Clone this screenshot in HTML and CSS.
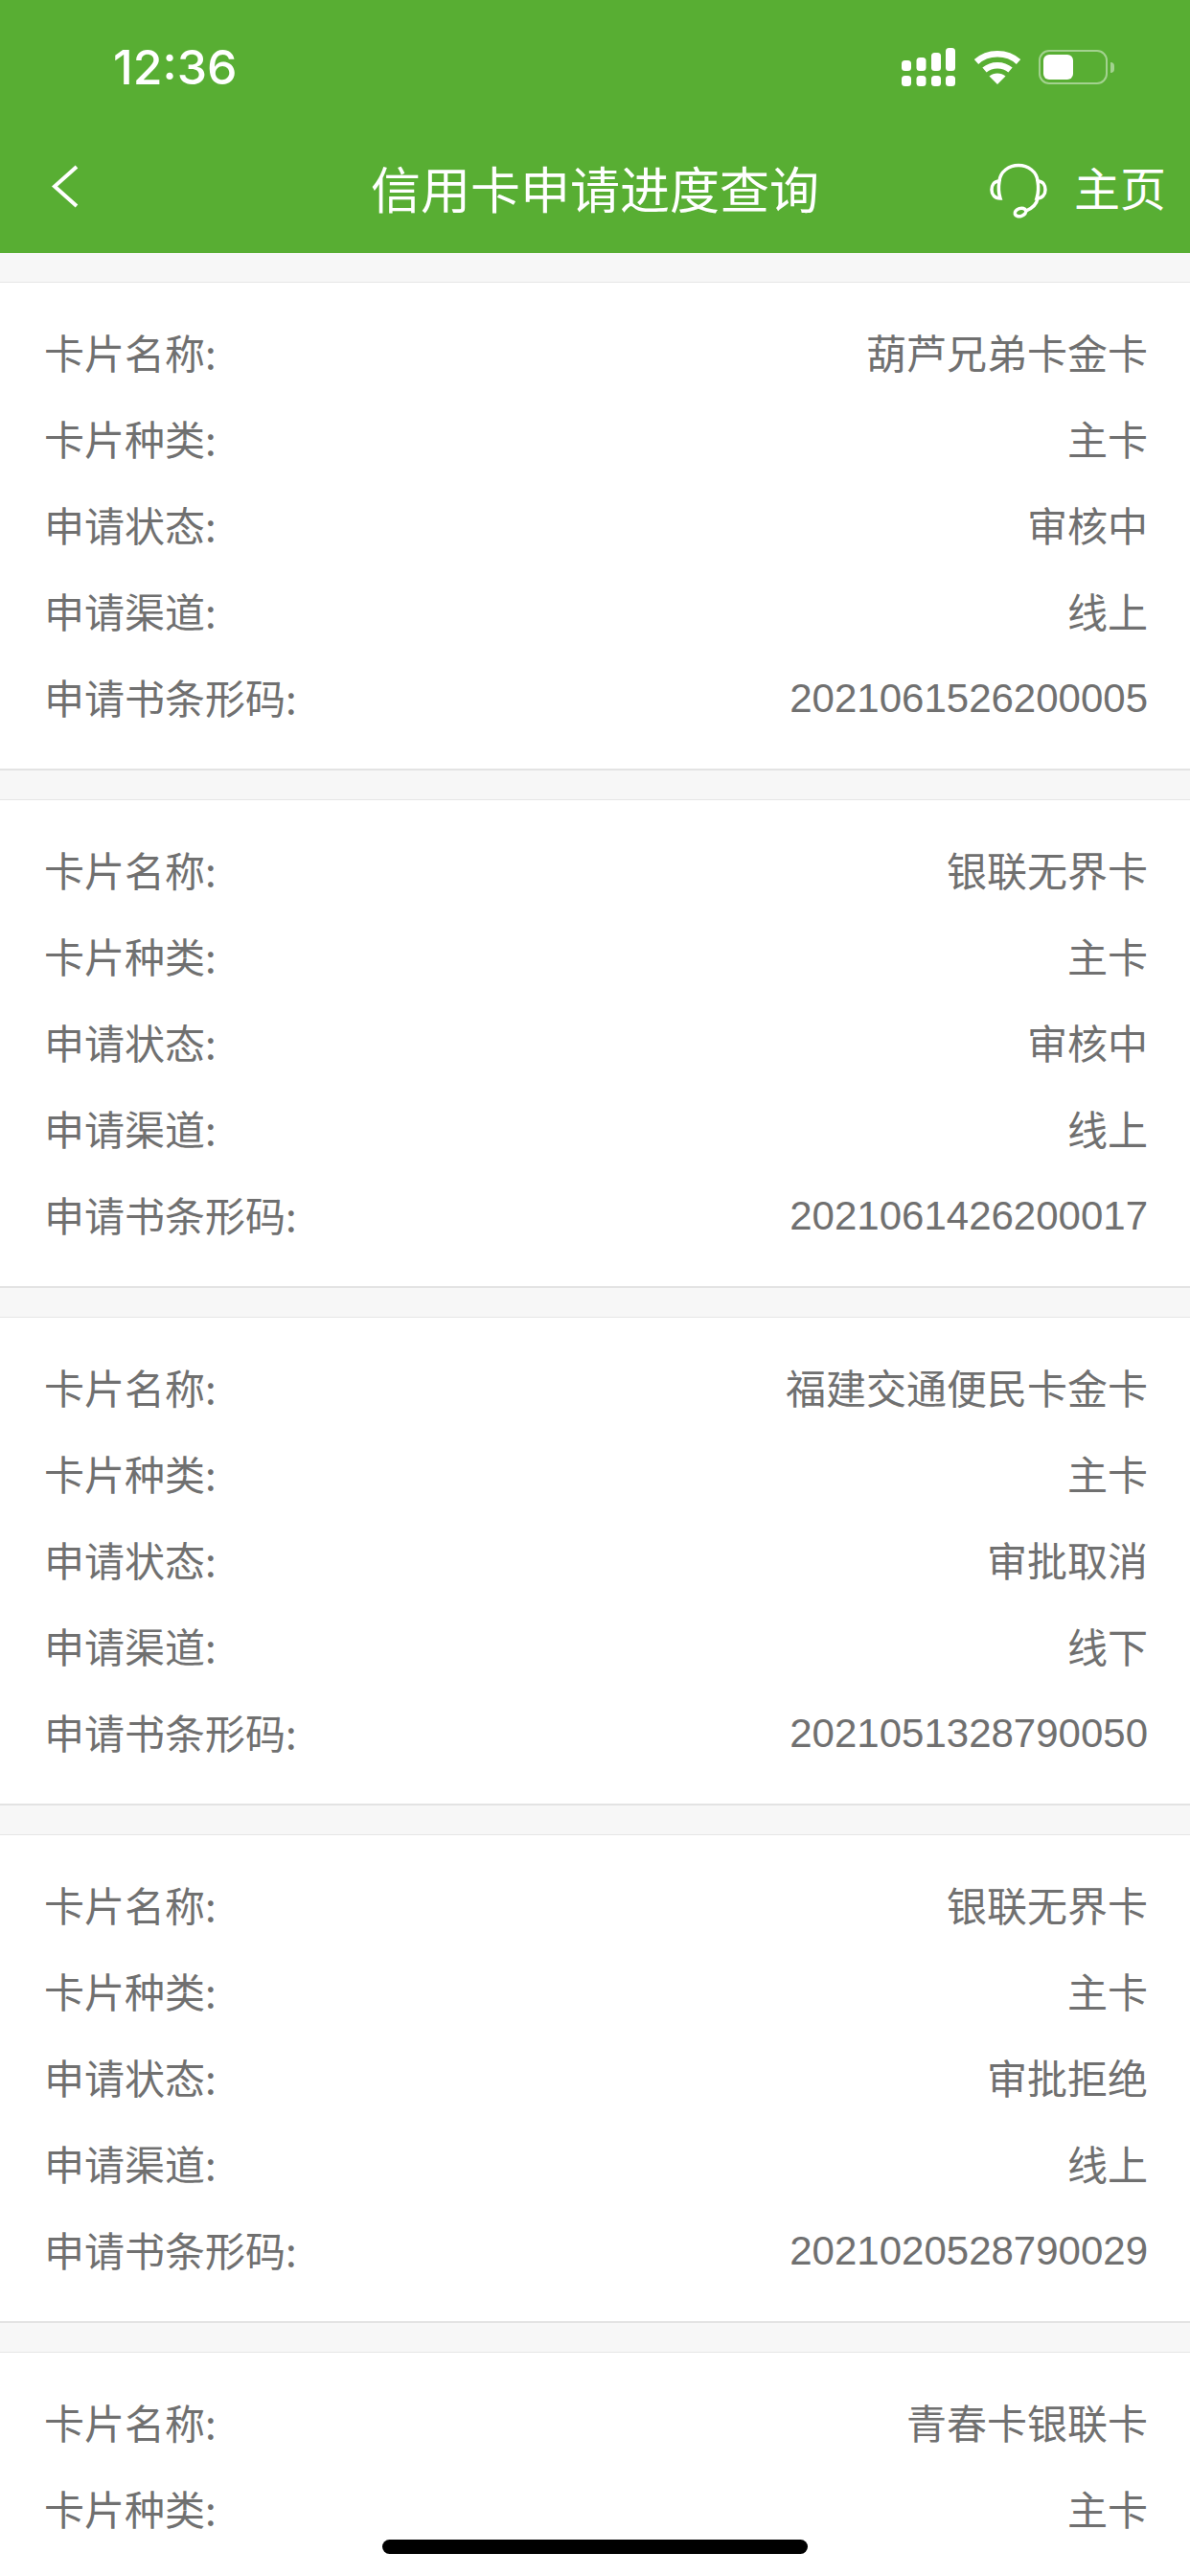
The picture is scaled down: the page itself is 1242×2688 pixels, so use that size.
FILE: index.html
```html
<!DOCTYPE html>
<html lang="zh-CN">
  <head>
    <meta charset="UTF-8" />
    <title>信用卡申请进度查询</title>
    <link rel="stylesheet" href="styles.css">
  </head>
  <body>
    <div class="page">
      <div class="top">
        <div class="status">
          <span class="time">12:36</span>
          <div class="status-icons">
            <svg class="signal" width="56" height="40" viewBox="0 0 56 40">
              <g fill="#fff">
                <rect x="0" y="13" width="10" height="11" rx="3.500" />
                <rect x="15.500" y="10" width="10" height="14" rx="3.500" />
                <rect x="31" y="5" width="10" height="19" rx="3.500" />
                <rect x="46" y="0" width="10" height="24" rx="3.500" />
                <rect x="0" y="29" width="10" height="11" rx="3.500" />
                <rect x="15.500" y="29" width="10" height="11" rx="3.500" />
                <rect x="31" y="29" width="10" height="11" rx="3.500" />
                <rect x="46" y="29" width="10" height="11" rx="3.500" />
              </g>
            </svg>
            <svg class="wifi" width="50" height="36" viewBox="0 0 50 36">
              <g fill="none" stroke="#fff" stroke-width="6.500">
                <path d="M3 12.500C15 1.500 35 1.500 47 12.500" />
                <path d="M11.500 21C19 14.500 31 14.500 38.500 21" />
              </g>
              <path d="M25 36L16.500 27.500C21 23.500 29 23.500 33.500 27.500Z" fill="#fff" />
            </svg>
            <div class="battery">
              <div class="battery-fill"></div>
            </div>
            <div class="battery-nub"></div>
          </div>
        </div>
        <div class="nav">
          <div class="nav-left">
            <svg width="30" height="48" viewBox="0 0 30 48">
              <path d="M28 3L5 23.500L28 44" fill="none" stroke="#fff" stroke-width="4" />
            </svg>
          </div>
          <h1>信用卡申请进度查询</h1>
          <div class="nav-right">
            <svg width="60" height="58" viewBox="0 0 60 58">
              <g fill="none" stroke="#fff" stroke-width="3.500">
                <path d="M10 19C11 9 20 2.500 30 2.500C40 2.500 49 9 50 19" />
                <path d="M10 19C4 19 2 24 2 28C2 33 5 37 11 37C9 31 9 25 10 19Z" />
                <path d="M50 19C56 19 58 24 58 28C58 33 55 37 49 37C51 31 51 25 50 19Z" />
                <path d="M50 37C49 43 45 47 38 50" />
                <ellipse cx="32" cy="51.500" rx="6" ry="4" transform="rotate(-18 32 51.500)" />
              </g>
            </svg>
            <span>主页</span>
          </div>
        </div>
      </div>

      <div class="list">
        <div class="card">
          <div class="row"><span>卡片名称:</span><span>葫芦兄弟卡金卡</span></div>
          <div class="row"><span>卡片种类:</span><span>主卡</span></div>
          <div class="row"><span>申请状态:</span><span>审核中</span></div>
          <div class="row"><span>申请渠道:</span><span>线上</span></div>
          <div class="row"><span>申请书条形码:</span><span class="num">2021061526200005</span></div>
        </div>
        <div class="card">
          <div class="row"><span>卡片名称:</span><span>银联无界卡</span></div>
          <div class="row"><span>卡片种类:</span><span>主卡</span></div>
          <div class="row"><span>申请状态:</span><span>审核中</span></div>
          <div class="row"><span>申请渠道:</span><span>线上</span></div>
          <div class="row"><span>申请书条形码:</span><span class="num">2021061426200017</span></div>
        </div>
        <div class="card">
          <div class="row"><span>卡片名称:</span><span>福建交通便民卡金卡</span></div>
          <div class="row"><span>卡片种类:</span><span>主卡</span></div>
          <div class="row"><span>申请状态:</span><span>审批取消</span></div>
          <div class="row"><span>申请渠道:</span><span>线下</span></div>
          <div class="row"><span>申请书条形码:</span><span class="num">2021051328790050</span></div>
        </div>
        <div class="card">
          <div class="row"><span>卡片名称:</span><span>银联无界卡</span></div>
          <div class="row"><span>卡片种类:</span><span>主卡</span></div>
          <div class="row"><span>申请状态:</span><span>审批拒绝</span></div>
          <div class="row"><span>申请渠道:</span><span>线上</span></div>
          <div class="row"><span>申请书条形码:</span><span class="num">2021020528790029</span></div>
        </div>
        <div class="card card-last">
          <div class="row"><span>卡片名称:</span><span>青春卡银联卡</span></div>
          <div class="row"><span>卡片种类:</span><span>主卡</span></div>
        </div>
      </div>

      <div class="home-bar"></div>
    </div>
  </body>
</html>
```

FILE: styles.css
```css
body {
  margin: 0;
  padding: 0;
  font-family: "Noto Sans CJK SC", "Liberation Sans", sans-serif;
}

.page {
  position: relative;
  display: flex;
  flex-direction: column;
  height: 2688px;
  overflow: hidden;
  background: #f7f7f7;
}

.top {
  height: 264px;
  flex-shrink: 0;
  background: #58ae33;
  color: #fff;
}

.status {
  display: flex;
  justify-content: space-between;
  align-items: center;
  height: 140px;
  padding: 0 79px 0 118px;
}

.time {
  font-family: Inter, sans-serif;
  font-size: 50px;
  font-weight: 500;
}

.status-icons {
  display: flex;
  align-items: center;
}

.wifi {
  margin-left: 19px;
}

.battery {
  box-sizing: border-box;
  width: 72px;
  height: 36px;
  margin-left: 18px;
  padding: 3px;
  border: 2px solid rgba(255, 255, 255, 0.45);
  border-radius: 11px;
}

.battery-fill {
  width: 31px;
  height: 26px;
  border-radius: 6px;
  background: #fff;
}

.battery-nub {
  width: 4px;
  height: 11px;
  margin-left: 3px;
  border-radius: 0 4px 4px 0;
  background: rgba(255, 255, 255, 0.45);
}

.nav {
  display: grid;
  grid-template-columns: 1fr auto 1fr;
  align-items: center;
  height: 124px;
}

.nav-left {
  display: flex;
  padding-left: 52px;
}

.nav-left svg {
  margin-bottom: 14px;
}

h1 {
  margin: 0 0 12px;
  font-size: 52px;
  font-weight: 400;
  line-height: 112px;
}

.nav-right {
  display: flex;
  justify-content: flex-end;
  align-items: center;
  gap: 28px;
  padding-right: 25px;
  font-size: 48px;
}

.nav-right svg {
  margin-bottom: 6px;
}

.nav-right span {
  margin-bottom: 16px;
}

.list {
  flex: 1;
  display: flex;
  flex-direction: column;
  gap: 30px;
  padding-top: 30px;
}

.card {
  padding: 26px 0 31px;
  border-top: 1px solid #e6e6e6;
  border-bottom: 2px solid #e3e3e3;
  background: #fff;
}

.card-last {
  flex: 1;
  border-bottom: 0;
}

.row {
  display: flex;
  justify-content: space-between;
  align-items: center;
  height: 90px;
  padding: 0 44px 0 46px;
  font-size: 42px;
  color: #707070;
}

.num {
  padding-top: 6px;
  font-family: "Liberation Sans", sans-serif;
}

.home-bar {
  position: absolute;
  left: 399px;
  bottom: 23px;
  width: 444px;
  height: 15px;
  border-radius: 8px;
  background: #000;
}
```
